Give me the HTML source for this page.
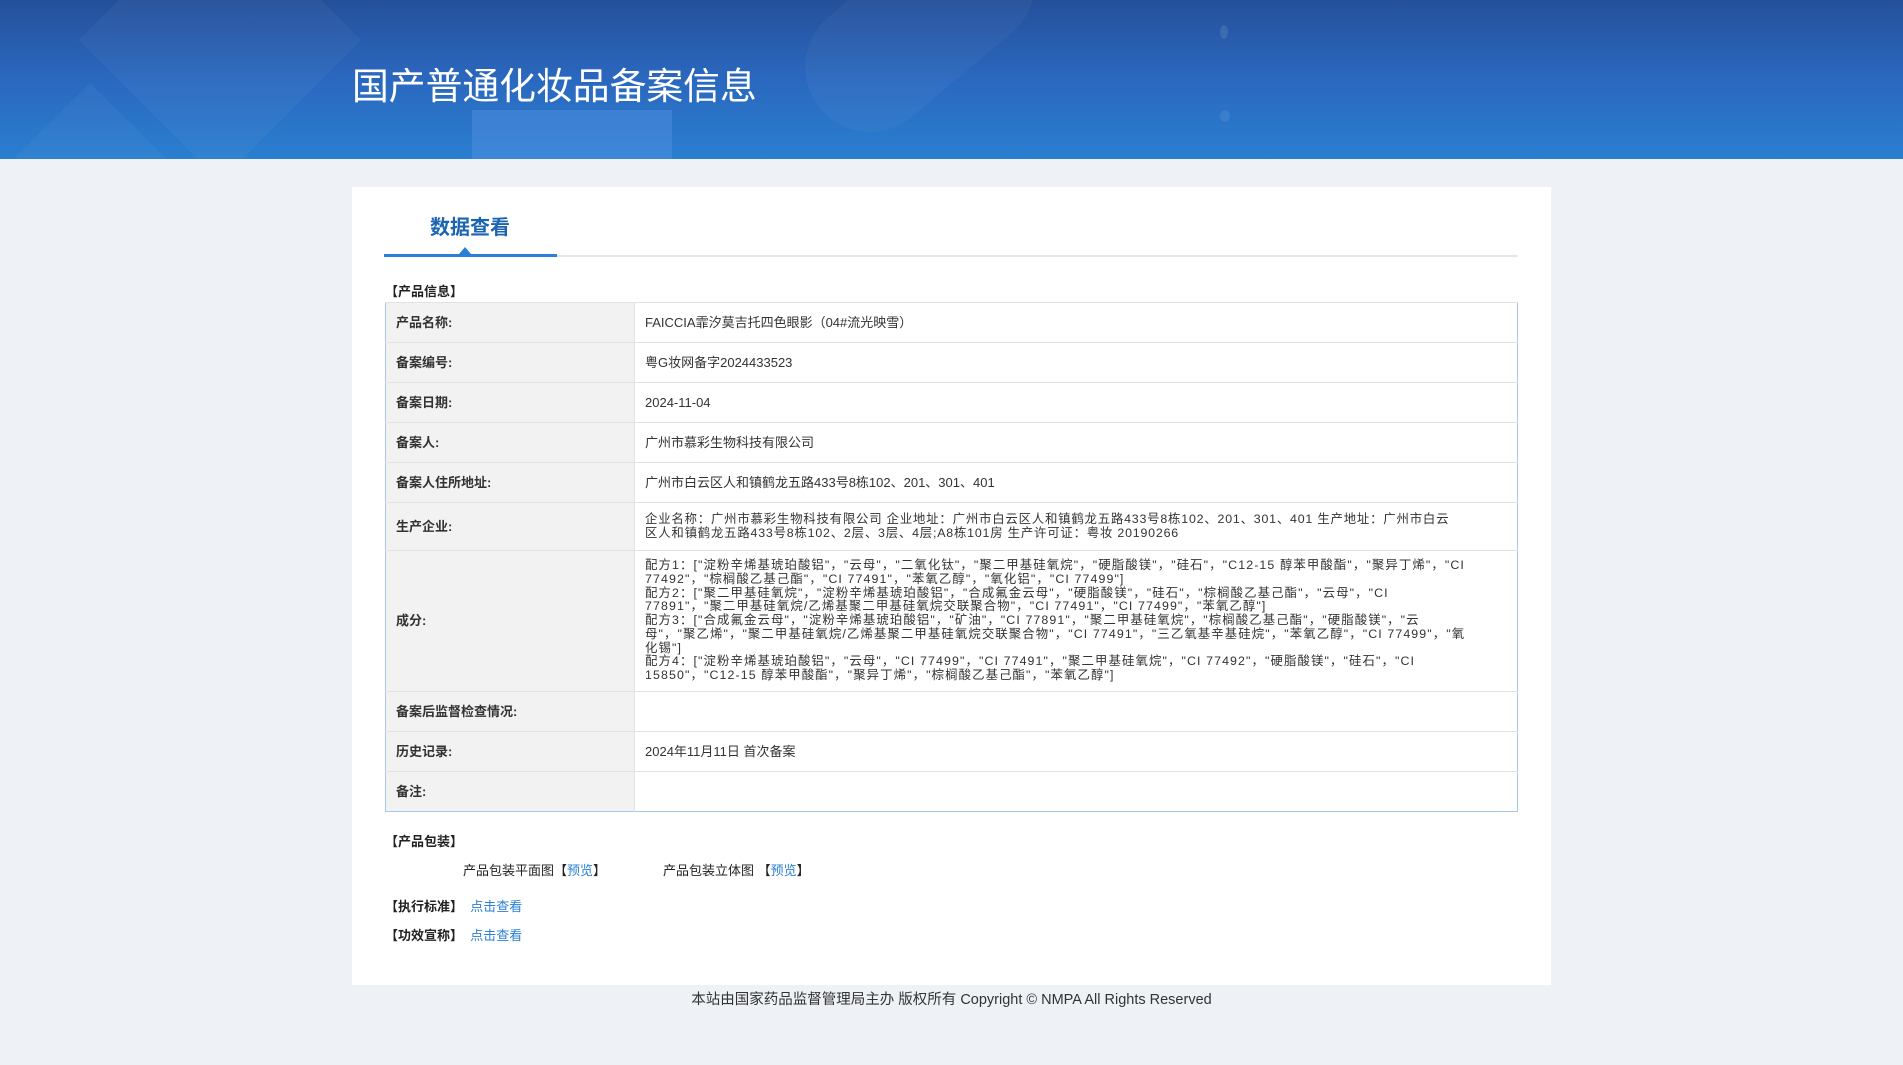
<!DOCTYPE html>
<html><head><meta charset="utf-8">
<style>
*{margin:0;padding:0;box-sizing:border-box}
body{width:1903px;height:1065px;background:#eef2f6;font-family:"Liberation Sans","Noto Sans CJK SC",sans-serif;color:#333;position:relative;overflow:hidden}
.hdr{position:absolute;left:0;top:0;width:1903px;height:159px;background:linear-gradient(180deg,#25509a 0%,#2a68bf 50%,#2a7fd0 100%);overflow:hidden}
.hdr .s{position:absolute;background:rgba(255,255,255,0.035)}
.hdr h1{position:absolute;left:352px;top:62px;font-size:36.8px;font-weight:normal;color:#fff;line-height:50px}
.card{position:absolute;left:352px;top:187px;width:1199px;height:798px;background:#fff}
.tab{position:absolute;left:430px;top:213px;font-size:20px;font-weight:bold;color:#1a64b0;line-height:30px}
.tline{position:absolute;left:384px;top:255px;width:1134px;height:2px;background:#e6e6e6}
.tact{position:absolute;left:384px;top:254px;width:173px;height:3px;background:#2a80d6}
.tri{position:absolute;left:459px;top:247px;width:0;height:0;border-left:6px solid transparent;border-right:6px solid transparent;border-bottom:7px solid #2a80d6}
.sec{position:absolute;font-size:13px;font-weight:bold;color:#222;line-height:18px}
table{position:absolute;left:385px;top:302px;width:1133px;border-collapse:collapse;border:1px solid #a9c6ea;font-size:13px}
td{border-top:1px solid #e3e3e3;vertical-align:middle;line-height:14px}
td.l{width:249px;background:#f2f2f2;font-weight:bold;padding-left:10px;color:#333;border-right:1px solid #e3e3e3}
td.v{padding-left:10px;color:#333}
.ing{font-size:12.4px;line-height:13.7px;white-space:nowrap;letter-spacing:1.1px}
.a{color:#2a80d6}
.pk{position:absolute;font-size:13px;color:#222;line-height:18px}
.ft{position:absolute;left:0;width:1903px;top:990px;text-align:center;font-size:14.5px;color:#333;line-height:20px}
</style></head><body>
<div class="hdr">
<div class="s" style="left:120px;top:-60px;width:200px;height:200px;transform:rotate(45deg)"></div>
<div class="s" style="left:0;top:120px;width:180px;height:180px;transform:rotate(45deg)"></div>
<div class="s" style="left:472px;top:110px;width:200px;height:80px;background:rgba(90,150,230,0.4)"></div>
<div class="s" style="left:790px;top:-40px;width:260px;height:130px;border-radius:65px;transform:rotate(-40deg)"></div>
<div class="s" style="left:1220px;top:25px;width:8px;height:14px;border-radius:50%;background:rgba(255,255,255,0.1)"></div>
<div class="s" style="left:1220px;top:110px;width:10px;height:12px;border-radius:50%;background:rgba(255,255,255,0.08)"></div>
<h1>国产普通化妆品备案信息</h1>
</div>
<div class="card"></div>
<div class="tab">数据查看</div>
<div class="tline"></div><div class="tact"></div><div class="tri"></div>
<div class="sec" style="left:385px;top:283px">【产品信息】</div>
<table>
<tr style="height:40px"><td class="l">产品名称:</td><td class="v">FAICCIA霏汐莫吉托四色眼影（04#流光映雪）</td></tr>
<tr style="height:40px"><td class="l">备案编号:</td><td class="v">粤G妆网备字2024433523</td></tr>
<tr style="height:40px"><td class="l">备案日期:</td><td class="v">2024-11-04</td></tr>
<tr style="height:40px"><td class="l">备案人:</td><td class="v">广州市慕彩生物科技有限公司</td></tr>
<tr style="height:40px"><td class="l">备案人住所地址:</td><td class="v">广州市白云区人和镇鹤龙五路433号8栋102、201、301、401</td></tr>
<tr style="height:48px"><td class="l">生产企业:</td><td class="v"><div class="ing" style="letter-spacing:0.8px">企业名称：广州市慕彩生物科技有限公司 企业地址：广州市白云区人和镇鹤龙五路433号8栋102、201、301、401 生产地址：广州市白云<br>区人和镇鹤龙五路433号8栋102、2层、3层、4层;A8栋101房 生产许可证：粤妆 20190266</div></td></tr>
<tr style="height:141px"><td class="l">成分:</td><td class="v"><div class="ing">配方1：["淀粉辛烯基琥珀酸铝"，"云母"，"二氧化钛"，"聚二甲基硅氧烷"，"硬脂酸镁"，"硅石"，"C12-15 醇苯甲酸酯"，"聚异丁烯"，"CI<br>77492"，"棕榈酸乙基己酯"，"CI 77491"，"苯氧乙醇"，"氧化铝"，"CI 77499"]<br>配方2：["聚二甲基硅氧烷"，"淀粉辛烯基琥珀酸铝"，"合成氟金云母"，"硬脂酸镁"，"硅石"，"棕榈酸乙基己酯"，"云母"，"CI<br>77891"，"聚二甲基硅氧烷/乙烯基聚二甲基硅氧烷交联聚合物"，"CI 77491"，"CI 77499"，"苯氧乙醇"]<br>配方3：["合成氟金云母"，"淀粉辛烯基琥珀酸铝"，"矿油"，"CI 77891"，"聚二甲基硅氧烷"，"棕榈酸乙基己酯"，"硬脂酸镁"，"云<br>母"，"聚乙烯"，"聚二甲基硅氧烷/乙烯基聚二甲基硅氧烷交联聚合物"，"CI 77491"，"三乙氧基辛基硅烷"，"苯氧乙醇"，"CI 77499"，"氧<br>化锡"]<br>配方4：["淀粉辛烯基琥珀酸铝"，"云母"，"CI 77499"，"CI 77491"，"聚二甲基硅氧烷"，"CI 77492"，"硬脂酸镁"，"硅石"，"CI<br>15850"，"C12-15 醇苯甲酸酯"，"聚异丁烯"，"棕榈酸乙基己酯"，"苯氧乙醇"]</div></td></tr>
<tr style="height:40px"><td class="l">备案后监督检查情况:</td><td class="v"></td></tr>
<tr style="height:40px"><td class="l">历史记录:</td><td class="v">2024年11月11日 首次备案</td></tr>
<tr style="height:40px"><td class="l">备注:</td><td class="v"></td></tr>
</table>
<div class="sec" style="left:385px;top:833px">【产品包装】</div>
<div class="pk" style="left:463px;top:862px">产品包装平面图【<span class="a">预览</span>】</div>
<div class="pk" style="left:663px;top:862px">产品包装立体图 【<span class="a">预览</span>】</div>
<div class="sec" style="left:385px;top:898px">【执行标准】 &nbsp;<span class="a" style="font-weight:normal">点击查看</span></div>
<div class="sec" style="left:385px;top:927px">【功效宣称】 &nbsp;<span class="a" style="font-weight:normal">点击查看</span></div>
<div class="ft">本站由国家药品监督管理局主办 版权所有 Copyright © NMPA All Rights Reserved</div>
</body></html>
